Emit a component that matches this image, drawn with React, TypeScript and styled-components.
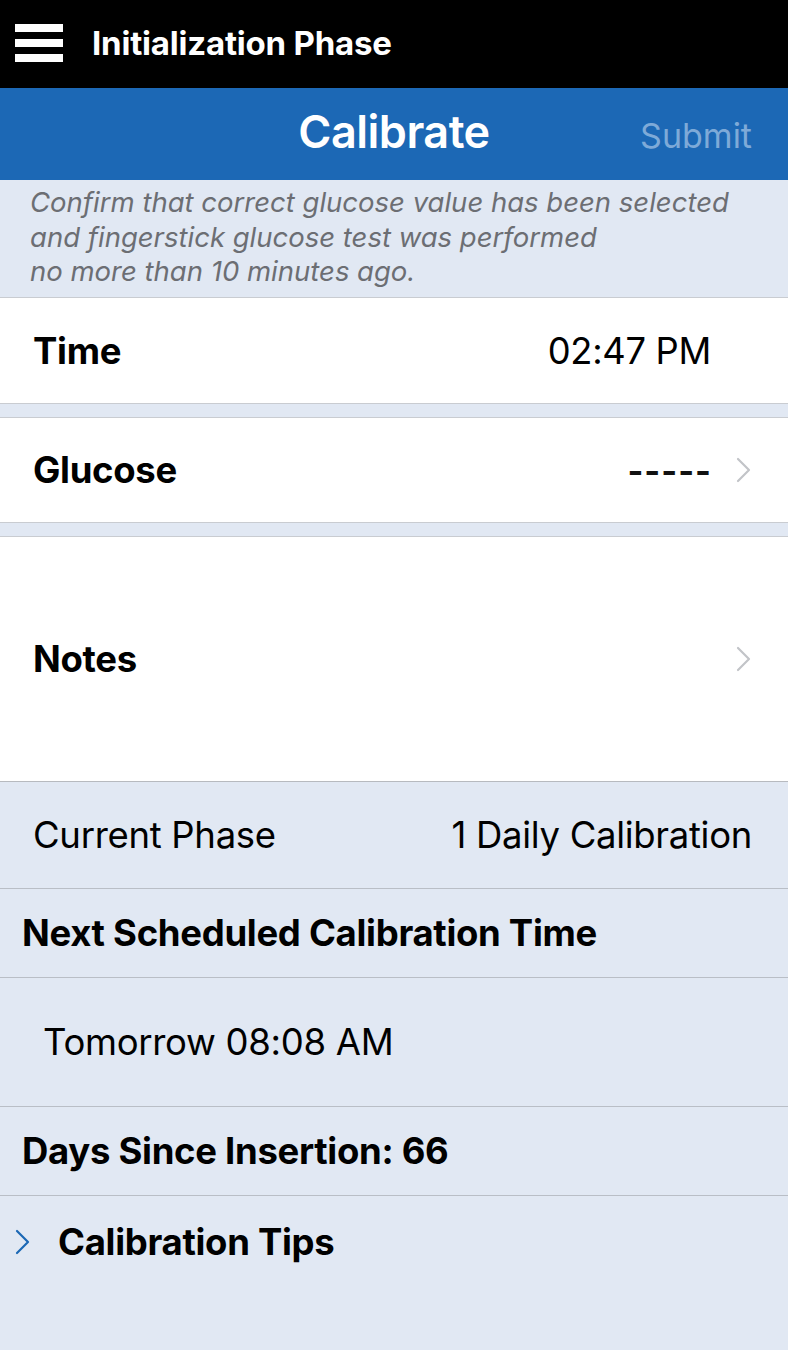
import React from 'react';
import styled, { createGlobalStyle } from 'styled-components';

const GlobalStyle = createGlobalStyle`
  html, body {
    margin: 0;
    padding: 0;
    background: #e1e8f3;
  }
  body {
    font-family: Inter, Roboto, "Liberation Sans", sans-serif;
    -webkit-font-smoothing: antialiased;
  }
`;

const Screen = styled.div`
  width: 788px;
  min-height: 1350px;
  background: #e1e8f3;
  display: flex;
  flex-direction: column;
`;

const TopBar = styled.header`
  height: 88px;
  box-sizing: border-box;
  padding: 0 0 3px 15px;
  background: #000;
  display: flex;
  align-items: center;
  gap: 29px;
`;

const Burger = styled.div`
  width: 48px;
  display: flex;
  flex-direction: column;
  gap: 7px;
  span {
    display: block;
    height: 8px;
    background: #fff;
  }
`;

const TopTitle = styled.h1`
  margin: 0;
  color: #fff;
  font-size: 33px;
  font-weight: 700;
  letter-spacing: -0.2px;
`;

const NavBar = styled.nav`
  height: 92px;
  background: #1c68b5;
  display: grid;
  grid-template-columns: 1fr auto 1fr;
  align-items: center;
  padding: 0 36px;
`;

const NavTitle = styled.div`
  grid-column: 2;
  color: #fff;
  font-size: 45px;
  font-weight: 600;
  letter-spacing: -0.5px;
  margin-top: -6px;
`;

const NavAction = styled.div`
  justify-self: end;
  color: #7eaad8;
  font-size: 34px;
  font-weight: 400;
  padding-top: 2px;
`;

const Notice = styled.p`
  margin: 0;
  height: 118px;
  box-sizing: border-box;
  padding: 5px 20px 0 30px;
  color: #6c6e73;
  font-style: italic;
  font-size: 27.5px;
  line-height: 34.5px;
  border-bottom: 1.5px solid #c9ccd1;
`;

const Card = styled.div<{ $height: number; $last?: boolean }>`
  height: ${(p) => p.$height}px;
  box-sizing: border-box;
  background: #fff;
  border-bottom: 1.5px solid ${(p) => (p.$last ? '#b7babf' : '#c9ccd1')};
  display: flex;
  align-items: center;
  padding: 0 36px 0 33px;
`;

const Spacer = styled.div`
  height: 13px;
  border-bottom: 1.5px solid #c9ccd1;
`;

const CardLabel = styled.div`
  flex: 1;
  color: #000;
  font-size: 36.5px;
  font-weight: 700;
  letter-spacing: -0.3px;
`;

const CardValue = styled.div`
  color: #000;
  font-size: 36.3px;
  font-weight: 400;
  letter-spacing: -0.3px;
  margin-right: 41px;
`;

const Dashes = styled.div`
  color: #111;
  font-size: 34px;
  font-weight: 700;
  letter-spacing: 1px;
  margin-right: 24px;
`;

const InfoRow = styled.div<{ $height: number; $indent: number; $last?: boolean }>`
  height: ${(p) => p.$height}px;
  box-sizing: border-box;
  display: flex;
  align-items: center;
  padding: 0 36px 0 ${(p) => p.$indent}px;
  border-bottom: ${(p) => (p.$last ? 'none' : '1.5px solid #b9bec6')};
`;

const InfoText = styled.div<{ $bold?: boolean }>`
  flex: 1;
  color: #000;
  font-size: 36.5px;
  font-weight: ${(p) => (p.$bold ? 700 : 400)};
  letter-spacing: -0.3px;
  display: flex;
  align-items: center;
  gap: 27px;
`;

const InfoValue = styled.div`
  color: #000;
  font-size: 36.5px;
  letter-spacing: -0.3px;
`;

const Chevron = ({ color, w = 16, h = 26 }: { color: string; w?: number; h?: number }) => (
  <svg width={w} height={h} viewBox="0 0 16 26" fill="none">
    <path d="M2 2 L13 13 L2 24" stroke={color} strokeWidth="2.2" strokeLinecap="round" strokeLinejoin="round" />
  </svg>
);

export default function App() {
  return (
    <Screen>
      <GlobalStyle />
      <TopBar>
        <Burger>
          <span />
          <span />
          <span />
        </Burger>
        <TopTitle>Initialization Phase</TopTitle>
      </TopBar>
      <NavBar>
        <NavTitle>Calibrate</NavTitle>
        <NavAction>Submit</NavAction>
      </NavBar>
      <Notice>
        Confirm that correct glucose value has been selected
        <br />
        and fingerstick glucose test was performed
        <br />
        no more than 10 minutes ago.
      </Notice>
      <Card $height={106}>
        <CardLabel>Time</CardLabel>
        <CardValue>02:47 PM</CardValue>
      </Card>
      <Spacer />
      <Card $height={105}>
        <CardLabel>Glucose</CardLabel>
        <Dashes>-----</Dashes>
        <Chevron color="#c2c4c8" />
      </Card>
      <Spacer />
      <Card $height={245} $last>
        <CardLabel>Notes</CardLabel>
        <Chevron color="#c2c4c8" />
      </Card>
      <InfoRow $height={107} $indent={33}>
        <InfoText>Current Phase</InfoText>
        <InfoValue>1 Daily Calibration</InfoValue>
      </InfoRow>
      <InfoRow $height={89} $indent={22}>
        <InfoText $bold>Next Scheduled Calibration Time</InfoText>
      </InfoRow>
      <InfoRow $height={129} $indent={43}>
        <InfoText>Tomorrow 08:08 AM</InfoText>
      </InfoRow>
      <InfoRow $height={89} $indent={22}>
        <InfoText $bold>Days Since Insertion: 66</InfoText>
      </InfoRow>
      <InfoRow $height={92} $indent={15} $last>
        <InfoText $bold>
          <Chevron color="#1c68b5" w={16} h={26} />
          Calibration Tips
        </InfoText>
      </InfoRow>
    </Screen>
  );
}
